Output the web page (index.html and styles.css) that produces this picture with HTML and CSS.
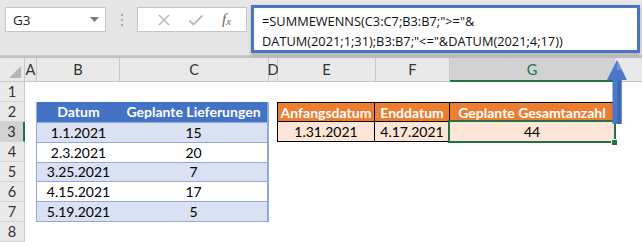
FILE: index.html
```html
<!DOCTYPE html>
<html lang="de">
<head>
  <meta charset="UTF-8" />
  <title>SUMMEWENNS Datum</title>
  <link rel="stylesheet" href="styles.css">
</head>
<body>

<div class="app">
  <div class="toolbar">
    <div class="namebox">
      <span>G3</span>
      <svg width="9" height="5" viewBox="0 0 9 5"><path d="M0 0h9L4.5 5z" fill="#7a7a7a"/></svg>
    </div>
    <div class="grip"><i></i><i></i><i></i></div>
    <div class="fxbtns">
      <svg width="14" height="14" viewBox="0 0 14 14"><path d="M2 2l10 10M12 2L2 12" stroke="#bcbcbc" stroke-width="1.6" fill="none"/></svg>
      <svg width="16" height="14" viewBox="0 0 16 14"><path d="M1.5 7.5l4 4L14.5 2.5" stroke="#bcbcbc" stroke-width="1.8" fill="none"/></svg>
      <span class="fx">f<sub>x</sub></span>
    </div>
    <div class="formula">
      =SUMMEWENNS(C3:C7;B3:B7;"&gt;="&amp;<br>
      DATUM(2021;1;31);B3:B7;"&lt;="&amp;DATUM(2021;4;17))
    </div>
  </div>
  <div class="shade"></div>

  <div class="sheet">
    <div class="corner"><span></span></div>
    <div class="colhead">A</div>
    <div class="colhead">B</div>
    <div class="colhead">C</div>
    <div class="colhead">D</div>
    <div class="colhead">E</div>
    <div class="colhead">F</div>
    <div class="colhead active">G</div>
    <div class="colhead last"></div>

    <div class="rowhead r1">1</div>
    <div class="rowhead r2">2</div>
    <div class="rowhead r3 active">3</div>
    <div class="rowhead r4">4</div>
    <div class="rowhead r5">5</div>
    <div class="rowhead r6">6</div>
    <div class="rowhead r7">7</div>
    <div class="rowhead r8">8</div>

    <div class="blue-table">
      <div class="bt-head">Datum</div><div class="bt-head">Geplante Lieferungen</div>
      <div class="bt-cell band">1.1.2021</div><div class="bt-cell band">15</div>
      <div class="bt-cell">2.3.2021</div><div class="bt-cell">20</div>
      <div class="bt-cell band">3.25.2021</div><div class="bt-cell band">7</div>
      <div class="bt-cell">4.15.2021</div><div class="bt-cell">17</div>
      <div class="bt-cell band">5.19.2021</div><div class="bt-cell band">5</div>
    </div>

    <div class="orange-table">
      <div class="ot-head">Anfangsdatum</div>
      <div class="ot-head">Enddatum</div>
      <div class="ot-head">Geplante Gesamtanzahl</div>
      <div class="ot-cell">1.31.2021</div>
      <div class="ot-cell">4.17.2021</div>
      <div class="ot-cell selected">44<span class="handle"></span></div>
    </div>
  </div>

  <svg class="arrow" width="24" height="68" viewBox="0 0 24 68">
    <path d="M12 1L22 21H16.5V65H7.5V21H2z" fill="#4a77c6"/>
    <path d="M12 1L17 11H12z" fill="#6f95d6"/>
    <path d="M12.5 21H16.5V65H12.5z" fill="#3f69b6"/>
  </svg>
</div>

</body>
</html>
```

FILE: styles.css
```css
body {
  margin: 0;
  background-color: #fff;
  font-family: 'Lato', 'Liberation Sans', sans-serif;
}

.app {
  position: relative;
  width: 642px;
  height: 242px;
  overflow: hidden;
}

.toolbar {
  height: 55px;
  background-color: #e6e6e6;
  display: flex;
  align-items: flex-start;
}

.namebox {
  margin: 7px 0 0 5px;
  width: 101px;
  height: 25px;
  box-sizing: border-box;
  border: 1px solid #c6c6c6;
  background-color: #fff;
  display: flex;
  align-items: center;
  justify-content: space-between;
  padding: 0 6px 0 7px;
  font-family: 'Open Sans', sans-serif;
  font-size: 13.5px;
  color: #222;
}

.grip {
  margin: 14px 0 0 15px;
  display: flex;
  flex-direction: column;
  gap: 3px;
}

.grip i {
  display: block;
  width: 2px;
  height: 2px;
  background-color: #a8a8a8;
}

.fxbtns {
  margin: 7px 0 0 14px;
  width: 110px;
  height: 25px;
  box-sizing: border-box;
  border: 1px solid #c6c6c6;
  background-color: #fff;
  display: flex;
  align-items: center;
  justify-content: space-around;
  padding: 0 6px 0 10px;
}

.fx {
  font-family: 'Liberation Serif', serif;
  font-style: italic;
  font-size: 15px;
  color: #666;
}

.fx sub {
  font-size: 11px;
  vertical-align: -1px;
}

.formula {
  margin: 5px 0 0 4px;
  width: 389px;
  height: 48px;
  box-sizing: border-box;
  border: 3px solid #4a74c4;
  background-color: #fff;
  padding: 3px 0 0 8px;
  font-family: 'Open Sans', sans-serif;
  font-size: 12.8px;
  line-height: 20px;
  color: #111;
  box-shadow: 0 2px 3px rgba(0,0,0,0.25);
}

.shade {
  height: 3px;
  background: linear-gradient(#cfcfcf, #b9b9b9);
}

.sheet {
  display: grid;
  grid-template-columns: 25px 12px 83px 149px 9px 98px 74px 165px 27px;
  grid-template-rows: 24px repeat(8, 20px);
  font-size: 14px;
  color: #000;
}

.corner {
  background-color: #e9e9e9;
  border-right: 1px solid #c8c8c8;
  border-bottom: 1px solid #c8c8c8;
  position: relative;
}

.corner span {
  position: absolute;
  right: 3px;
  bottom: 3px;
  width: 0;
  height: 0;
  border-left: 12px solid transparent;
  border-bottom: 12px solid #b5b5b5;
}

.colhead {
  background-color: #e9e9e9;
  border-right: 1px solid #c8c8c8;
  border-bottom: 1px solid #c8c8c8;
  display: flex;
  align-items: center;
  justify-content: center;
  color: #333;
  font-size: 14.6px;
}

.colhead.active {
  background-color: #d2d2d2;
  color: #217346;
  border-bottom: 2px solid #217346;
}

.colhead.last {
  border-right: none;
}

.rowhead {
  grid-column: 1;
  background-color: #e9e9e9;
  border-right: 1px solid #c8c8c8;
  border-bottom: 1px solid #d4d4d4;
  display: flex;
  align-items: center;
  justify-content: center;
  color: #333;
  font-size: 14.6px;
}

.rowhead.active {
  background-color: #d2d2d2;
  border-right: 2px solid #217346;
}

.r1 { grid-row: 2; }
.r2 { grid-row: 3; }
.r3 { grid-row: 4; }
.r4 { grid-row: 5; }
.r5 { grid-row: 6; }
.r6 { grid-row: 7; }
.r7 { grid-row: 8; }
.r8 { grid-row: 9; }

.blue-table {
  grid-column: 3 / 5;
  grid-row: 3 / 9;
  display: grid;
  grid-template-columns: 83px 1fr;
  grid-template-rows: repeat(6, 1fr);
  border: 1px solid #8eaadb;
  border-top: none;
  border-right-width: 2px;
  margin-left: -1px;
}

.bt-head {
  background-color: #4472c4;
  color: #fff;
  font-weight: bold;
  display: flex;
  align-items: center;
  justify-content: center;
}

.bt-cell {
  border-top: 1px solid #8eaadb;
  display: flex;
  align-items: center;
  justify-content: center;
}

.bt-cell.band {
  background-color: #d9e1f2;
}

.orange-table {
  grid-column: 6 / 9;
  grid-row: 3 / 5;
  display: grid;
  grid-template-columns: 97px 75px 1fr;
  grid-template-rows: 1fr 1fr;
  border: 1px solid #000;
  margin-left: -1px;
  position: relative;
}

.ot-head {
  background-color: #ed7d31;
  color: #fff;
  font-weight: bold;
  display: flex;
  align-items: center;
  justify-content: center;
  border-right: 1px solid #000;
  border-bottom: 1px solid #000;
}

.ot-cell {
  background-color: #fce4d6;
  display: flex;
  align-items: center;
  justify-content: center;
  border-right: 1px solid #000;
}

.ot-head:nth-child(3), .ot-cell:nth-child(6) {
  border-right: none;
}

.selected {
  position: relative;
}

.selected::after {
  content: "";
  position: absolute;
  left: -2px;
  top: -2px;
  right: -2px;
  bottom: -2px;
  border: 2px solid #217346;
}

.handle {
  position: absolute;
  right: -4px;
  bottom: -5px;
  width: 5px;
  height: 5px;
  background-color: #217346;
  border: 1px solid #fff;
  z-index: 1;
}

.arrow {
  position: absolute;
  left: 605px;
  top: 59px;
}
```
